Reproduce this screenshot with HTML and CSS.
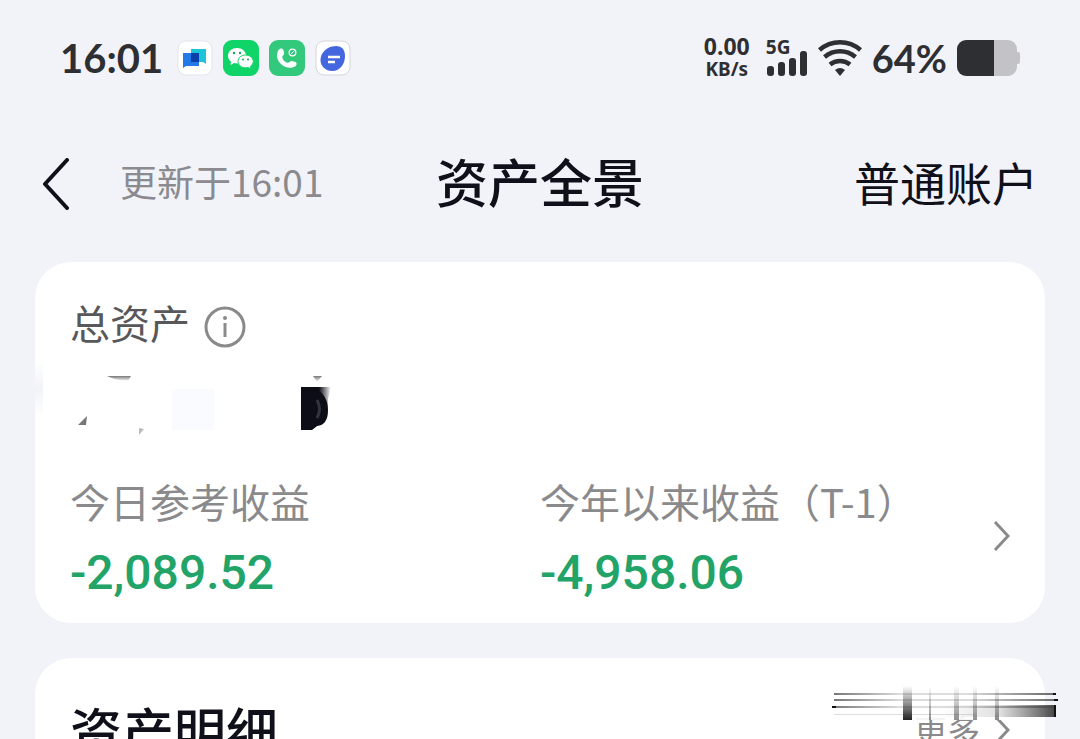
FILE: index.html
```html
<!DOCTYPE html>
<html lang="zh-CN">
<head>
    <meta charset="UTF-8">
    <meta name="viewport" content="width=device-width, initial-scale=1.0">
    <title>资产全景</title>
    <link rel="stylesheet" href="styles.css">
</head>
<body>
    <!-- Status bar -->
    <div class="status-bar">
        <div class="status-left">
            <span class="clock">16:01</span>
            <svg class="app-icon" viewBox="0 0 36 36">
                <rect x="1" y="1" width="34" height="34" rx="8" fill="#fff" stroke="#e3e5ea"/>
                <path d="M14 9h15v15l-3-2H14z" fill="#1cc4d8"/>
                <path d="M6 13h16v13H9l-3 2z" fill="#2479e8"/>
                <path d="M14 13h8v9h-8z" fill="#0a3fa8"/>
            </svg>
            <svg class="app-icon" viewBox="0 0 36 36">
                <rect width="36" height="36" rx="9" fill="#10d468"/>
                <path d="M14 8c-5 0-9 3.400-9 7.700 0 2.400 1.200 4.400 3 5.800L7.500 25l3.600-2c1 .3 2 .4 3.200.4 5 0 8.800-3.500 8.800-7.700S19 8 14 8z" fill="#fff"/>
                <path d="M22.500 15c-4.300 0-7.500 2.900-7.500 6.400s3.200 6.400 7.500 6.400c1 0 1.800-.1 2.600-.4l3 1.600-.6-2.800c1.700-1.200 2.800-2.900 2.800-4.800 0-3.500-3.400-6.400-7.800-6.400z" fill="#fff" stroke="#10d468"/>
                <g fill="#10a858"><circle cx="11" cy="13" r="1.200"/><circle cx="17" cy="13" r="1.200"/><circle cx="20" cy="19.500" r="1"/><circle cx="25" cy="19.500" r="1"/></g>
            </svg>
            <svg class="app-icon" viewBox="0 0 36 36">
                <rect width="36" height="36" rx="9" fill="#32c97c"/>
                <path d="M9.500 10c1.500-2.300 4.500-2 5 .2l.6 3c.3 1.800-2 2.300-1.800 4 .4 2.700 2.900 5.200 5.500 5.600 1.700.2 2.300-2.200 4-1.800l3 .7c2.200.5 2.500 3.300.2 4.800-4.500 2.800-10.500 1-14.300-2.700S6.800 14.300 9.500 10z" fill="#fff"/>
                <circle cx="23.500" cy="12.500" r="3.300" fill="none" stroke="#fff" stroke-width="1.300"/>
                <path d="M21.500 14.500l4-4" stroke="#fff"/>
            </svg>
            <svg class="app-icon" viewBox="0 0 36 36">
                <rect x="1" y="1" width="34" height="34" rx="8" fill="#fff" stroke="#d4d6da"/>
                <path d="M17 6.500c8-2 13 1.500 13 9.500S25 31 17.500 31 5.500 26 5.500 20 10 8.300 17 6.500z" fill="#4467e0"/>
                <path d="M13 17h12M13 22h7" stroke="#fff" stroke-width="2.400"/>
            </svg>
        </div>
        <div class="status-right">
            <div class="net-speed"><span class="speed-value">0.00</span><span>KB/s</span></div>
            <div class="signal">
                <span>5G</span>
                <svg class="signal-bars" viewBox="0 0 42 26" fill="#2e2f32">
                    <rect x="1" y="15" width="7" height="10" rx="3"/>
                    <rect x="12" y="11" width="7" height="14" rx="3"/>
                    <rect x="23" y="7" width="7" height="18" rx="3"/>
                    <rect x="34" y="0" width="7" height="25" rx="3"/>
                </svg>
            </div>
            <svg class="wifi" viewBox="0 0 44 38" fill="none" stroke="#2e2f32" stroke-width="4.500">
                <path d="M1.500 11a31 31 0 0 1 41 0"/>
                <path d="M6.500 18a24 24 0 0 1 31 0"/>
                <path d="M12 25.500a16 16 0 0 1 20 0"/>
                <path d="M22 37l-5-6q5-4 10 0z" fill="#2e2f32" stroke="none"/>
            </svg>
            <span class="battery-level">64%</span>
            <svg class="battery" viewBox="0 0 63 36">
                <path d="M37 0h14a9 9 0 0 1 9 9v3h1q2 0 2 2v8q0 2-2 2h-1v3a9 9 0 0 1-9 9H37z" fill="#c2c2c7"/>
                <path d="M37 0H9a9 9 0 0 0-9 9v18a9 9 0 0 0 9 9h28z" fill="#2e2f32"/>
            </svg>
        </div>
    </div>

    <header class="nav-bar">
        <div class="nav-left">
            <button class="back-btn" aria-label="返回">
                <svg class="back-icon" viewBox="0 0 28 52" fill="none" stroke="#10101a" stroke-width="4" stroke-linecap="round" stroke-linejoin="round">
                    <path d="M25 2L3 26l22 24"/>
                </svg>
            </button>
            <span class="updated">更新于16:01</span>
        </div>
        <h1 class="title">资产全景</h1>
        <button class="account-btn">普通账户</button>
    </header>

    <main class="content">
        <section class="card">
            <div class="total-row">
                <h2 class="label total-label">总资产</h2>
                <button class="info-btn" aria-label="说明">
                    <svg class="info-icon" viewBox="0 0 42 42" fill="none" stroke="#8a8a8c" stroke-width="3">
                        <circle cx="21" cy="21" r="19"/>
                        <path d="M21 17v14"/>
                        <circle cx="21" cy="12" r="2" fill="#8a8a8c" stroke="none"/>
                    </svg>
                </button>
            </div>

            <!-- Masked balance -->
            <svg class="masked" viewBox="0 0 300 80">
                <defs>
                    <linearGradient id="edge" x1="0" x2="1" y1="0" y2="0">
                        <stop offset="0" stop-color="#0d0d18"/>
                        <stop offset=".6" stop-color="#0d0d18"/>
                        <stop offset="1" stop-color="#0d0d18" stop-opacity="0"/>
                    </linearGradient>
                    <linearGradient id="smear" x1="0" x2="0" y1="0" y2="1">
                        <stop offset="0" stop-color="#777"/>
                        <stop offset="1" stop-color="#777" stop-opacity="0"/>
                    </linearGradient>
                    <linearGradient id="side" x1="0" x2="0" y1="0" y2="1">
                        <stop offset="0" stop-color="#f2f3f8" stop-opacity="0"/>
                        <stop offset=".5" stop-color="#f2f3f8"/>
                        <stop offset="1" stop-color="#f2f3f8" stop-opacity="0"/>
                    </linearGradient>
                </defs>
                <rect x="-35" y="0" width="8" height="54" fill="url(#side)"/>
                <path d="M37 14h24l-3 5q-14-1-21-5z" fill="url(#smear)"/>
                <path d="M243 14h9l-5 6z" fill="url(#smear)"/>
                <path d="M8 63l9-9-1 9z" fill="#777"/>
                <path d="M69 66l5 1-5 6z" fill="#bbb"/>
                <rect x="102" y="27" width="42" height="41" fill="#fafbff"/>
                <path d="M231 25h30l-3 12q1 18-11 27l-5 4h-11z" fill="url(#edge)"/>
                <path d="M231 25h13q14 8 14 23t-11 16q-4 3-8 4h-8z" fill="#0d0d18"/>
                <path d="M247 38q5 9 0 18" fill="none" stroke="#34343e" stroke-width="3"/>
            </svg>

            <div class="stats">
                <div class="stat">
                    <span class="label">今日参考收益</span>
                    <span class="amount">-2,089.52</span>
                </div>
                <div class="stat-group">
                    <div class="stat">
                        <span class="label">今年以来收益（T-1）</span>
                        <span class="amount">-4,958.06</span>
                    </div>
                    <button class="arrow-btn" aria-label="收益详情">
                        <svg class="arrow" viewBox="0 0 18 32" fill="none" stroke="#8a8a8c" stroke-width="3">
                            <path d="M3 2l13 14L3 30"/>
                        </svg>
                    </button>
                </div>
            </div>
        </section>

        <section class="card detail-card">
            <h2 class="section-title">资产明细</h2>
            <a class="more" href="#">更多
                <svg class="arrow" viewBox="0 0 18 32" fill="none" stroke="#8a8a8c" stroke-width="3">
                    <path d="M3 2l13 14L3 30"/>
                </svg>
            </a>
            <!-- Smudge over the top of the link -->
            <svg class="smudge" viewBox="0 0 228 34">
                <defs>
                    <linearGradient id="line" x1="0" x2="1" y1="0" y2="0">
                        <stop offset="0" stop-color="#777"/>
                        <stop offset=".3" stop-color="#ddd"/>
                        <stop offset=".6" stop-color="#ddd"/>
                        <stop offset="1" stop-color="#666"/>
                    </linearGradient>
                    <linearGradient id="block" x1="0" x2="1" y1="0" y2="0">
                        <stop offset="0" stop-color="#666" stop-opacity="0"/>
                        <stop offset=".5" stop-color="#666" stop-opacity=".2"/>
                        <stop offset="1" stop-color="#444"/>
                    </linearGradient>
                    <linearGradient id="bar" x1="0" x2="0" y1="0" y2="1">
                        <stop offset="0" stop-color="#333" stop-opacity="0"/>
                        <stop offset="1" stop-color="#222"/>
                    </linearGradient>
                </defs>
                <rect x="2" y="6" width="211" height="28" fill="#fff" fill-opacity=".9"/>
                <rect x="2" y="7" width="222" height="2" fill="url(#line)"/>
                <rect x="2" y="13" width="224" height="2" fill="url(#line)"/>
                <rect x="0" y="20" width="224" height="2" fill="url(#line)"/>
                <rect x="2" y="28" width="140" height="1" fill="#ddd"/>
                <rect x="110" y="19" width="114" height="12" fill="url(#block)"/>
                <rect x="71" y="0" width="9" height="34" fill="url(#bar)"/>
                <g fill="url(#bar)" opacity=".5">
                    <rect x="97" y="0" width="2" height="34"/>
                    <rect x="122" y="0" width="5" height="34"/>
                    <rect x="141" y="0" width="4" height="34"/>
                    <rect x="163" y="0" width="4" height="34"/>
                </g>
                <path d="M221 7h3v2h-3zM222 13h4v2h-4zM222 19h2v12h-2zM0 20h4v2H0z" fill="#111"/>
            </svg>
        </section>
    </main>
</body>
</html>
```

FILE: styles.css
```css
* {
    box-sizing: border-box;
}

body {
    margin: 0;
    height: 100vh;
    overflow: hidden;
    background: #f2f3f8;
    color: #10101a;
    font-family: "Noto Sans CJK SC", sans-serif;
}

h1, h2 {
    margin: 0;
    font-weight: 500;
}

button {
    display: flex;
    align-items: center;
    padding: 0;
    border: none;
    background: none;
    color: inherit;
    font-family: inherit;
    cursor: pointer;
}

svg {
    display: block;
    flex: none;
}

/* Status bar */
.status-bar {
    display: flex;
    justify-content: space-between;
    align-items: center;
    height: 116px;
    padding: 0 60px;
    color: #2e2f32;
    font-family: Lato, sans-serif;
    font-weight: bold;
}

.status-left,
.status-right {
    display: flex;
    align-items: center;
}

.status-left {
    gap: 10px;
}

.status-right {
    gap: 10px;
}

.clock {
    margin-right: 4px;
    font-size: 40px;
    line-height: 48px;
}

.app-icon {
    width: 36px;
    height: 36px;
}

.net-speed {
    display: flex;
    flex-direction: column;
    align-items: center;
    margin-right: 6px;
    font-family: "Noto Sans", sans-serif;
    font-size: 19px;
    line-height: 23px;
}

.speed-value {
    font-size: 23px;
}

.signal {
    font-family: "Noto Sans", sans-serif;
    font-size: 19px;
    line-height: 16px;
}

.signal-bars {
    width: 42px;
    height: 26px;
    margin-top: -4px;
}

.wifi {
    width: 44px;
    height: 38px;
}

.battery-level {
    font-size: 38px;
    line-height: 48px;
}

.battery {
    width: 63px;
    height: 36px;
}

/* Nav bar */
.nav-bar {
    display: grid;
    grid-template-columns: 1fr auto 1fr;
    align-items: center;
    height: 136px;
    padding: 0 42px 6px;
}

.nav-left {
    display: flex;
    align-items: center;
    gap: 50px;
}

.back-btn {
    padding-top: 6px;
}

.back-icon {
    width: 28px;
    height: 52px;
}

.updated {
    color: #8a8a8f;
    font-size: 37px;
    line-height: 52px;
}

.title {
    font-size: 52px;
    line-height: 60px;
}

.account-btn {
    justify-self: end;
    font-size: 46px;
    line-height: 60px;
}

/* Cards */
.content {
    display: flex;
    flex-direction: column;
    gap: 35px;
    padding: 10px 35px 0;
}

.card {
    padding: 34px 35px 15px;
    border-radius: 36px;
    background: #fff;
}

.label {
    color: #8a8a8c;
    font-size: 40px;
    font-weight: 400;
    line-height: 74px;
}

.total-row {
    display: flex;
    align-items: flex-end;
    gap: 14px;
}

.total-label {
    color: #58585a;
    line-height: 52px;
}

.info-icon {
    width: 42px;
    height: 42px;
}

.masked {
    width: 300px;
    height: 80px;
    margin-top: 14px;
    overflow: visible;
}

.stats {
    display: grid;
    grid-template-columns: 1fr 1fr;
    margin-top: 22px;
}

.stat {
    display: flex;
    flex-direction: column;
}

.stat-group {
    display: flex;
    justify-content: space-between;
    align-items: center;
}

.amount {
    color: #22a468;
    font-family: Roboto, sans-serif;
    font-size: 48px;
    font-weight: 500;
    line-height: 70px;
}

.arrow {
    width: 18px;
    height: 32px;
}

.detail-card {
    position: relative;
    display: flex;
    justify-content: space-between;
    align-items: center;
}

.section-title {
    font-size: 52px;
    line-height: 76px;
}

.more {
    display: flex;
    align-items: center;
    gap: 12px;
    color: #8a8a8c;
    font-size: 33px;
    text-decoration: none;
}

.smudge {
    position: absolute;
    top: 28px;
    right: -15px;
    width: 228px;
    height: 34px;
}
```
